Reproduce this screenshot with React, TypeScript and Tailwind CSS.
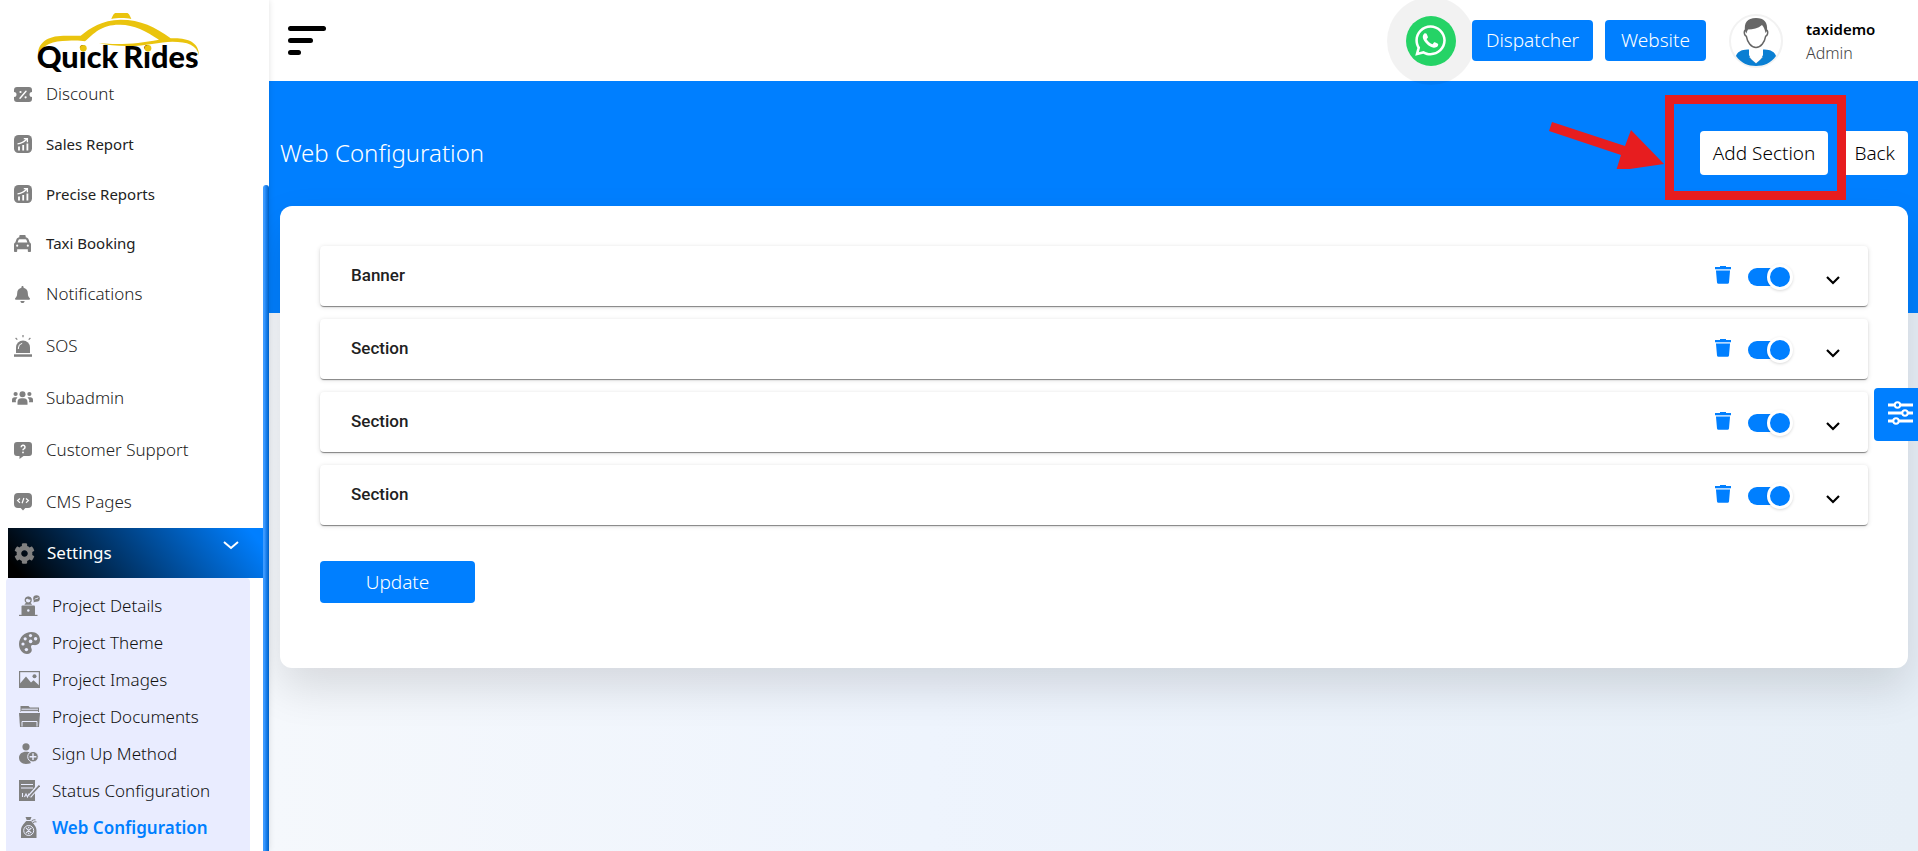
import type { ReactNode } from 'react';
import { FaBell, FaWhatsapp, FaCog } from 'react-icons/fa';
import { FaTaxi } from 'react-icons/fa6';

type Item = { label: string; icon: ReactNode; text?: string; row?: string };

const PercentIcon = () => (
  <svg viewBox="0 0 18 15" className="h-[15px] w-[18px]">
    <path fill="#808080" d="M3 0h12a3 3 0 0 1 3 3v2a2.5 2.5 0 0 0 0 5v2a3 3 0 0 1-3 3H3a3 3 0 0 1-3-3v-2a2.5 2.5 0 0 0 0-5V3a3 3 0 0 1 3-3z" />
    <path stroke="#fff" strokeWidth="1.4" strokeLinecap="round" d="M6 11.2l6-7" />
    <circle cx="6.5" cy="5" r="1.1" fill="#fff" />
    <circle cx="11.6" cy="10.3" r="1.1" fill="#fff" />
  </svg>
);

const ReportIcon = () => (
  <svg viewBox="0 0 18 18" className="size-[18px]">
    <rect width="18" height="18" rx="4.5" fill="#808080" />
    <path stroke="#fff" strokeWidth="1.8" d="M5 15.5v-4M9.2 15.5V10M13.4 15.5V8.5" />
    <path fill="none" stroke="#fff" strokeWidth="1.3" d="M3.5 8.8C7 8.5 10 7 13 4M9.8 3.7h3.6v3.6" />
  </svg>
);

const SirenIcon = () => (
  <svg viewBox="0 0 18 22" className="h-[22px] w-[18px]" fill="#808080">
    <path d="M2 18v-5.5a7 7 0 0 1 14 0V18z" />
    <rect y="19.3" width="18" height="2.5" />
    <path fill="none" stroke="#fff" strokeWidth="1" d="M4.4 14v-1a4.8 4.8 0 0 1 3.8-4.7" />
    <path stroke="#808080" strokeWidth="1.2" d="M9 0v2.2M1.6 3l1.7 1.6M16.4 3l-1.7 1.6" />
  </svg>
);

const TeamIcon = () => (
  <svg viewBox="0 0 21 14" className="h-[14px] w-[21px]" fill="#808080">
    <circle cx="10.5" cy="3.2" r="3" />
    <circle cx="3.6" cy="3" r="2.1" />
    <circle cx="17.4" cy="3" r="2.1" />
    <path d="M5.5 13.8v-2.5a4 4 0 0 1 4-4h2a4 4 0 0 1 4 4v2.5zM0 11.2V9a2.8 2.8 0 0 1 2.8-2.8h2.7A5 5 0 0 0 4 11.2zM21 11.2V9a2.8 2.8 0 0 0-2.8-2.8h-2.7A5 5 0 0 1 17 11.2z" />
  </svg>
);

const QuestionIcon = () => (
  <svg viewBox="0 0 18 17" className="h-[17px] w-[18px]">
    <path fill="#808080" d="M3 0h12a3 3 0 0 1 3 3v8a3 3 0 0 1-3 3H9.5L5.5 17v-3H3a3 3 0 0 1-3-3V3a3 3 0 0 1 3-3z" />
    <path fill="none" stroke="#fff" strokeWidth="1.5" d="M7.2 5.3a1.9 1.9 0 1 1 2.7 1.6c-.7.3-.9.7-.9 1.4" />
    <circle cx="9" cy="10.4" r=".9" fill="#fff" />
  </svg>
);

const CodeIcon = () => (
  <svg viewBox="0 0 18 18" className="size-[18px]">
    <path fill="#808080" d="M4 0h10a4 4 0 0 1 4 4v7a4 4 0 0 1-4 4h-2.7L9 17.5 6.7 15H4a4 4 0 0 1-4-4V4a4 4 0 0 1 4-4z" />
    <path fill="none" stroke="#fff" strokeWidth="1.2" d="M6 5.5L3.6 7.6 6 9.7M12 5.5l2.4 2.1L12 9.7M9.9 5l-1.8 5.2" />
  </svg>
);

const DetailsIcon = () => (
  <svg viewBox="0 0 21 21" className="size-[21px]" fill="#808080">
    <rect x="2.5" y="10.5" width="13.5" height="10" rx="1" />
    <rect y="19.8" width="18.5" height="1.2" />
    <path d="M5.5 9.8c0-1.3 1.5-2.3 3.7-2.3s3.8 1 3.8 2.3z" />
    <circle cx="9.2" cy="5" r="3" fill="#e9ecff" stroke="#808080" strokeWidth="1.2" />
    <path d="M6 4.5a3.3 3.3 0 0 1 6.5 0c-2 .4-3.500-.1-4.200-1-.5.8-1.200 1-2.300 1z" />
    <circle cx="17.5" cy="3.5" r="3.3" />
    <path d="M14.5 7.5l.6-3 2 2z" />
    <path fill="none" stroke="#e9ecff" strokeWidth=".8" d="M16 4.5l1.200-1.500.8 1 1.200-1.800" />
    <circle cx="9.3" cy="15.5" r="1.2" fill="#e9ecff" />
  </svg>
);

const PaletteIcon = () => (
  <svg viewBox="0 0 21 22" className="h-[22px] w-[21px]">
    <path
      fill="#808080"
      d="M12.500 0C5.500 0 0 5.500 0 12c0 5.500 3.500 10 8 10 3 0 4.800-1.800 4.800-4 0-1.500-.8-2.300-.8-3.300 0-1.500 1.400-1.800 2.800-1.600 3.800.5 6.200-1.700 6.200-5.300C21 3.300 17.500 0 12.500 0z"
    />
    <g fill="#e9ecff">
      <circle cx="11.5" cy="3.6" r="1.6" />
      <circle cx="16.6" cy="6.8" r="1.7" />
      <circle cx="6.2" cy="6.8" r="1.6" />
      <circle cx="4" cy="12" r="1.6" />
      <circle cx="7.4" cy="17.6" r="1.7" />
      <circle cx="11.6" cy="9.4" r="1.8" />
    </g>
  </svg>
);

const ImagesIcon = () => (
  <svg viewBox="0 0 21 17" className="h-[17px] w-[21px]">
    <rect x=".6" y=".6" width="19.8" height="15.8" fill="none" stroke="#808080" strokeWidth="1.2" />
    <path fill="#808080" d="M1 15.5v-3l6-7 5 6 2.500-2.200 5.500 5V16H1z" />
    <circle cx="15.5" cy="5.3" r="2" fill="#808080" />
  </svg>
);

const DocumentsIcon = () => (
  <svg viewBox="0 0 21 21" className="size-[21px]" fill="#808080">
    <path d="M1.5 0h8l1.500 1.500h9V6H1.500z" />
    <path fill="none" stroke="#e9ecff" d="M2.500 3.200h16.500M2 5.400h17" />
    <path d="M0 7h21l-1 14H1z" />
    <path fill="none" stroke="#e9ecff" d="M3 20.500v-5h15v5" />
  </svg>
);

const SignUpIcon = () => (
  <svg viewBox="0 0 20 21" className="h-[21px] w-[20px]" fill="#808080">
    <circle cx="7" cy="3.8" r="3.6" />
    <path d="M0 14.500C0 11 3 8.700 7 8.700c2 0 3.500.5 4.600 1.400v10.100c-1.300.5-3 .8-4.800.8C3 21 0 18.500 0 14.500z" />
    <circle cx="14" cy="13.7" r="5.3" stroke="#e9ecff" />
    <path stroke="#e9ecff" strokeWidth="1.4" d="M14 10.300v6.800M10.600 13.700h6.800" />
  </svg>
);

const StatusIcon = () => (
  <svg viewBox="0 0 21 21" className="size-[21px]">
    <path fill="#808080" d="M0 0h16v21H0z" />
    <path fill="none" stroke="#e9ecff" strokeWidth="1.1" d="M2 4.500h12M2 8h12M3.500 13v4M5.500 17l1.500-3 1.500 3 1.700-3.500" />
    <path stroke="#e9ecff" strokeWidth="4" d="M10.500 16.500l9-10.500" />
    <path stroke="#808080" strokeWidth="1.8" d="M10.500 16.500l10-11" />
  </svg>
);

const WebIcon = () => (
  <svg viewBox="0 0 18 21" className="h-[21px] w-[18px]" fill="#808080">
    <path d="M5.500 0h6l-1.200 3H6.700zM6.300 4h4.500c3 3 5.700 5.500 5.700 9.500V21H1v-7.500C1 9.500 3.500 7 6.300 4z" />
    <circle cx="8.7" cy="13.5" r="5" fill="none" stroke="#e9ecff" />
    <path fill="none" stroke="#e9ecff" strokeWidth="1.1" d="M6 10.800l5.400 5.400M11.400 10.800L6 16.200M8.700 9.800v1.500M8.700 15.700v1.500" />
    <path fill="none" stroke="#808080" strokeWidth="1.1" d="M11.500 4.500c1-1.500 2.500-2 4-1.500M13 6c.5-1 2-1.500 3.500-1" />
  </svg>
);

const items: Item[] = [
  { label: 'Discount', icon: <PercentIcon /> },
  { label: 'Sales Report', icon: <ReportIcon />, text: 'text-[15px]' },
  { label: 'Precise Reports', icon: <ReportIcon />, text: 'text-[15px]' },
  { label: 'Taxi Booking', icon: <FaTaxi size={17} />, text: 'text-[15px]', row: 'h-[49px]' },
  { label: 'Notifications', icon: <FaBell size={17} />, row: 'h-[52px]' },
  { label: 'SOS', icon: <SirenIcon />, row: 'h-[52px]' },
  { label: 'Subadmin', icon: <TeamIcon />, row: 'h-[52px]' },
  { label: 'Customer Support', icon: <QuestionIcon />, row: 'h-[52px]' },
  { label: 'CMS Pages', icon: <CodeIcon />, row: 'h-[52px]' },
];

const subItems: Item[] = [
  { label: 'Project Details', icon: <DetailsIcon /> },
  { label: 'Project Theme', icon: <PaletteIcon /> },
  { label: 'Project Images', icon: <ImagesIcon /> },
  { label: 'Project Documents', icon: <DocumentsIcon /> },
  { label: 'Sign Up Method', icon: <SignUpIcon /> },
  { label: 'Status Configuration', icon: <StatusIcon /> },
  { label: 'Web Configuration', icon: <WebIcon />, text: 'text-[17px] font-semibold text-[#007fff]' },
];

const sections = ['Banner', 'Section', 'Section', 'Section'];

function Logo() {
  return (
    <svg viewBox="0 0 540 240" className="h-20 w-[180px]" role="img" aria-label="QuickRides">
      <g fill="#eac40e">
        <path d="M256 39h36c4 0 10 12 12 18-18-4-42-4-60 0 2-6 8-18 12-18z" />
        <path d="M24 168C22 128 52 108 100 107c24 0 40 1 52 0C180 84 216 60 272 59c60 0 104 22 150 56 44-3 86 8 85 52-6-32-34-42-80-42-40 0-82 14-138 13-30 0-56-2-82-8 76 6 120-1 180-11-40-26-76-46-120-45-52 0-76 26-102 50-12-3-32-3-52-2-44 0-76 10-89 46z" />
      </g>
      <text x="20" y="204" fontFamily="Lato, sans-serif" fontWeight="900" fontSize="92" fill="#000">
        Quick
      </text>
      <text x="280" y="204" fontFamily="Lato, sans-serif" fontWeight="900" fontSize="92" fill="#000">
        Rides
      </text>
      <circle cx="160" cy="145" r="10" fill="#eac40e" />
      <circle cx="354" cy="145" r="10" fill="#eac40e" />
    </svg>
  );
}

function Sidebar() {
  return (
    <aside className="relative z-10 flex w-[269px] shrink-0 flex-col bg-white shadow-[0_0_6px_rgba(0,0,0,0.12)]">
      <a href="#home" className="ml-[30px] h-[69px]">
        <Logo />
      </a>
      <nav className="flex flex-1 flex-col">
        {items.map((it) => (
          <a key={it.label} href="#menu" className={`flex items-center pl-[11px] text-[#222] ${it.row ?? 'h-[50px]'}`}>
            <span className="flex w-[23px] justify-center text-[#808080]">{it.icon}</span>
            <span className={`pl-3 ${it.text ?? 'text-[17px] font-light'}`}>{it.label}</span>
          </a>
        ))}
        <button className="mr-[6px] ml-2 flex h-[50px] items-center bg-[linear-gradient(50deg,#000_5%,#007fff_95%)] pl-[6px] text-left text-[17px] font-normal text-white">
          <FaCog size={21} className="text-[#808080]" />
          <span className="flex-1 pl-3">Settings</span>
          <svg viewBox="0 0 16 9" className="mr-6 mb-4 h-[9px] w-4 shrink-0" fill="none" stroke="#fff" strokeWidth="2">
            <path d="M1 1l7 6 7-6" />
          </svg>
        </button>
        <div className="mr-[19px] ml-[6px] flex-1 rounded-t bg-[#e9ecff] pt-[9px]">
          {subItems.map((it) => (
            <a key={it.label} href="#settings" className="flex h-[37px] items-center pl-3 text-[#111]">
              <span className="flex w-[22px] justify-center text-[#808080]">{it.icon}</span>
              <span className={`pl-3 ${it.text ?? 'text-[17px] font-light'}`}>{it.label}</span>
            </a>
          ))}
        </div>
      </nav>
      <div className="absolute top-[185px] right-0 bottom-0 w-[6px] rounded-t-sm bg-linear-to-r from-[#3d9bff] from-20% via-[#1a82f0] to-[#0060c4]" />
    </aside>
  );
}

function Avatar() {
  return (
    <svg viewBox="0 0 54 54" className="size-[54px]" role="img" aria-label="User avatar">
      <circle cx="27" cy="27" r="26" fill="#fff" stroke="#f2f2f2" strokeWidth="2" />
      <path fill="#0a7fd3" d="M7 42c1-4 6-7 13-6.500h14c7-.5 12 2.500 13 6.500-5 7-12 10-20 10S12 49 7 42z" />
      <path fill="#c4c4c4" d="M20 43l7 6.500 7-6.500z" />
      <path fill="#fff" d="M20 35h14v6c-1 3-4 6-7 8-3-2-6-5-7-8z" />
      <path fill="#fff" stroke="#666" strokeWidth="1.5" d="M16.500 16c-1 0-1.500 2-1 4 .4 1.500 1.200 2 1.800 2.200C18.300 28 22 33.500 27 33.500s8.700-5.500 9.700-11.300c.6-.2 1.400-.7 1.800-2.200.5-2 0-4-1-4l-3-8H19z" />
      <path fill="#666" d="M16 17c-1-8 2-13 11-13 8 0 12 4 11 13l-1.500 2c-.5-3-1.500-6-3.500-8-4 3.500-9 4.500-14 4.500-.8 1.300-1.300 2.500-1.600 4z" />
    </svg>
  );
}

function Header() {
  return (
    <header className="flex h-[81px] items-center bg-white pl-[19px]">
      <button aria-label="Toggle menu" className="flex flex-col gap-[7px]">
        <span className="h-[5px] w-[38px] rounded-full bg-black" />
        <span className="h-[5px] w-[25px] rounded-full bg-black" />
        <span className="h-[5px] w-[13px] rounded-full bg-black" />
      </button>
      <a href="#whatsapp" aria-label="WhatsApp" className="z-10 -my-1 ml-auto flex size-[88px] items-center justify-center rounded-full bg-black/5">
        <span className="flex size-[50px] items-center justify-center rounded-full bg-[#25d366] text-white">
          <FaWhatsapp size={35} />
        </span>
      </a>
      <a href="#dispatcher" className="z-10 -ml-[3px] flex h-[41px] items-center rounded bg-[#007fff] px-[14px] text-[19px] font-light text-white">
        Dispatcher
      </a>
      <a href="#website" className="ml-3 flex h-[41px] items-center rounded bg-[#007fff] px-4 text-[19px] font-light text-white">
        Website
      </a>
      <div className="ml-[23px]">
        <Avatar />
      </div>
      <div className="ml-[23px] w-[112px] leading-6">
        <p className="text-[15px] font-semibold text-black">taxidemo</p>
        <p className="text-[16px] font-light text-[#444]">Admin</p>
      </div>
    </header>
  );
}

function Callout() {
  return (
    <>
      <span className="pointer-events-none absolute -top-9 -right-[18px] -bottom-[25px] -left-[35px] z-10 border-[9px] border-[#e71d1f]" />
      <svg viewBox="0 0 116 48" className="pointer-events-none absolute -top-[10px] right-[163px] h-12 w-[116px]" fill="#e71d1f">
        <path d="M3 1l73 24 6-16 33 34-48 7 5-16L0 10z" />
      </svg>
    </>
  );
}

function SectionRow({ name, id }: { name: string; id: number }) {
  return (
    <li className="flex h-[60px] items-center rounded bg-white pr-7 pl-[31px] shadow-[0_2px_1px_-1px_rgba(0,0,0,0.3),0_1px_1px_rgba(0,0,0,0.2),0_1px_5px_rgba(0,0,0,0.14)]">
      <span className="flex-1 font-[Roboto] text-[17px] font-medium text-[#212121]">{name}</span>
      <button aria-label={`Delete ${name}`} className="mb-[2px]">
        <svg viewBox="0 0 16 18" className="h-[18px] w-4" fill="#007fff">
          <path d="M5 0h6v1h5v2.200H0V1h5zM1 5h14l-1 11.500a1.500 1.500 0 0 1-1.500 1.200h-9A1.500 1.500 0 0 1 2 16.500z" />
          <path fillOpacity=".5" d="M1 3.900h14V5H1z" />
        </svg>
      </button>
      <input
        id={`enabled-${id}`}
        type="checkbox"
        defaultChecked
        aria-label={`Enable ${name}`}
        className="relative mt-[2px] mr-[33px] ml-[17px] h-[18px] w-[45px] shrink-0 appearance-none rounded-full bg-linear-to-r from-[#007fff] from-70% to-transparent to-70% before:absolute before:-top-[4px] before:left-[19px] before:size-[26px] before:rounded-full before:border-[3px] before:border-white before:bg-[#007fff] before:shadow-[0_1px_3px_rgba(0,0,0,0.15)]"
      />
      <button aria-label={`Expand ${name}`} className="mt-[9px]">
        <svg viewBox="0 0 14 9" className="h-[9px] w-[14px]" fill="none" stroke="#000" strokeWidth="2.2">
          <path d="M1 1l6 6 6-6" />
        </svg>
      </button>
    </li>
  );
}

export default function App() {
  return (
    <div className="flex min-h-screen overflow-x-hidden bg-white font-['Noto_Sans',sans-serif]">
      <Sidebar />
      <div className="flex min-w-0 flex-1 flex-col">
        <Header />
        <main className="relative flex-1 bg-linear-to-r from-[#f5f8fc] via-[#eef4fd] via-40% to-[#e7eff7]">
          <div className="absolute inset-x-0 top-0 h-[232px] bg-[#007fff]" />
          <div className="relative pr-[10px] pl-[11px]">
            <div className="flex items-center pt-[50px] pb-[31px]">
              <h1 className="flex-1 text-[24px] leading-[44px] font-light text-white">Web Configuration</h1>
              <div className="relative">
                <button className="h-11 rounded bg-white px-[13px] text-[19px] font-light text-black">Add Section</button>
                <Callout />
              </div>
              <button className="ml-[13px] h-11 rounded bg-white px-[13px] text-[19px] font-light text-black">Back</button>
            </div>
            <section className="rounded-xl bg-white px-10 pt-10 pb-[65px] shadow-[0_20px_44px_rgba(0,0,0,0.12)]">
              <ul className="flex flex-col gap-[13px]">
                {sections.map((name, i) => (
                  <SectionRow key={i} id={i} name={name} />
                ))}
              </ul>
              <button className="mt-9 h-[42px] w-[155px] rounded bg-[#007fff] text-[19px] font-light text-white">Update</button>
            </section>
          </div>
          <button aria-label="Theme settings" className="absolute top-[307px] right-0 z-10 flex h-[53px] w-[44px] items-center rounded-l bg-[#007fff] pb-1 pl-[14px]">
            <svg viewBox="0 0 25 24" className="h-6 w-[25px]" stroke="#fff" strokeWidth="2.8" fill="#007fff">
              <path d="M0 4h25M0 12h25M0 20h25" />
              <g strokeWidth="2">
                <circle cx="9.5" cy="4" r="2.7" />
                <circle cx="17" cy="12" r="2.7" />
                <circle cx="8" cy="20" r="2.7" />
              </g>
            </svg>
          </button>
        </main>
      </div>
    </div>
  );
}
